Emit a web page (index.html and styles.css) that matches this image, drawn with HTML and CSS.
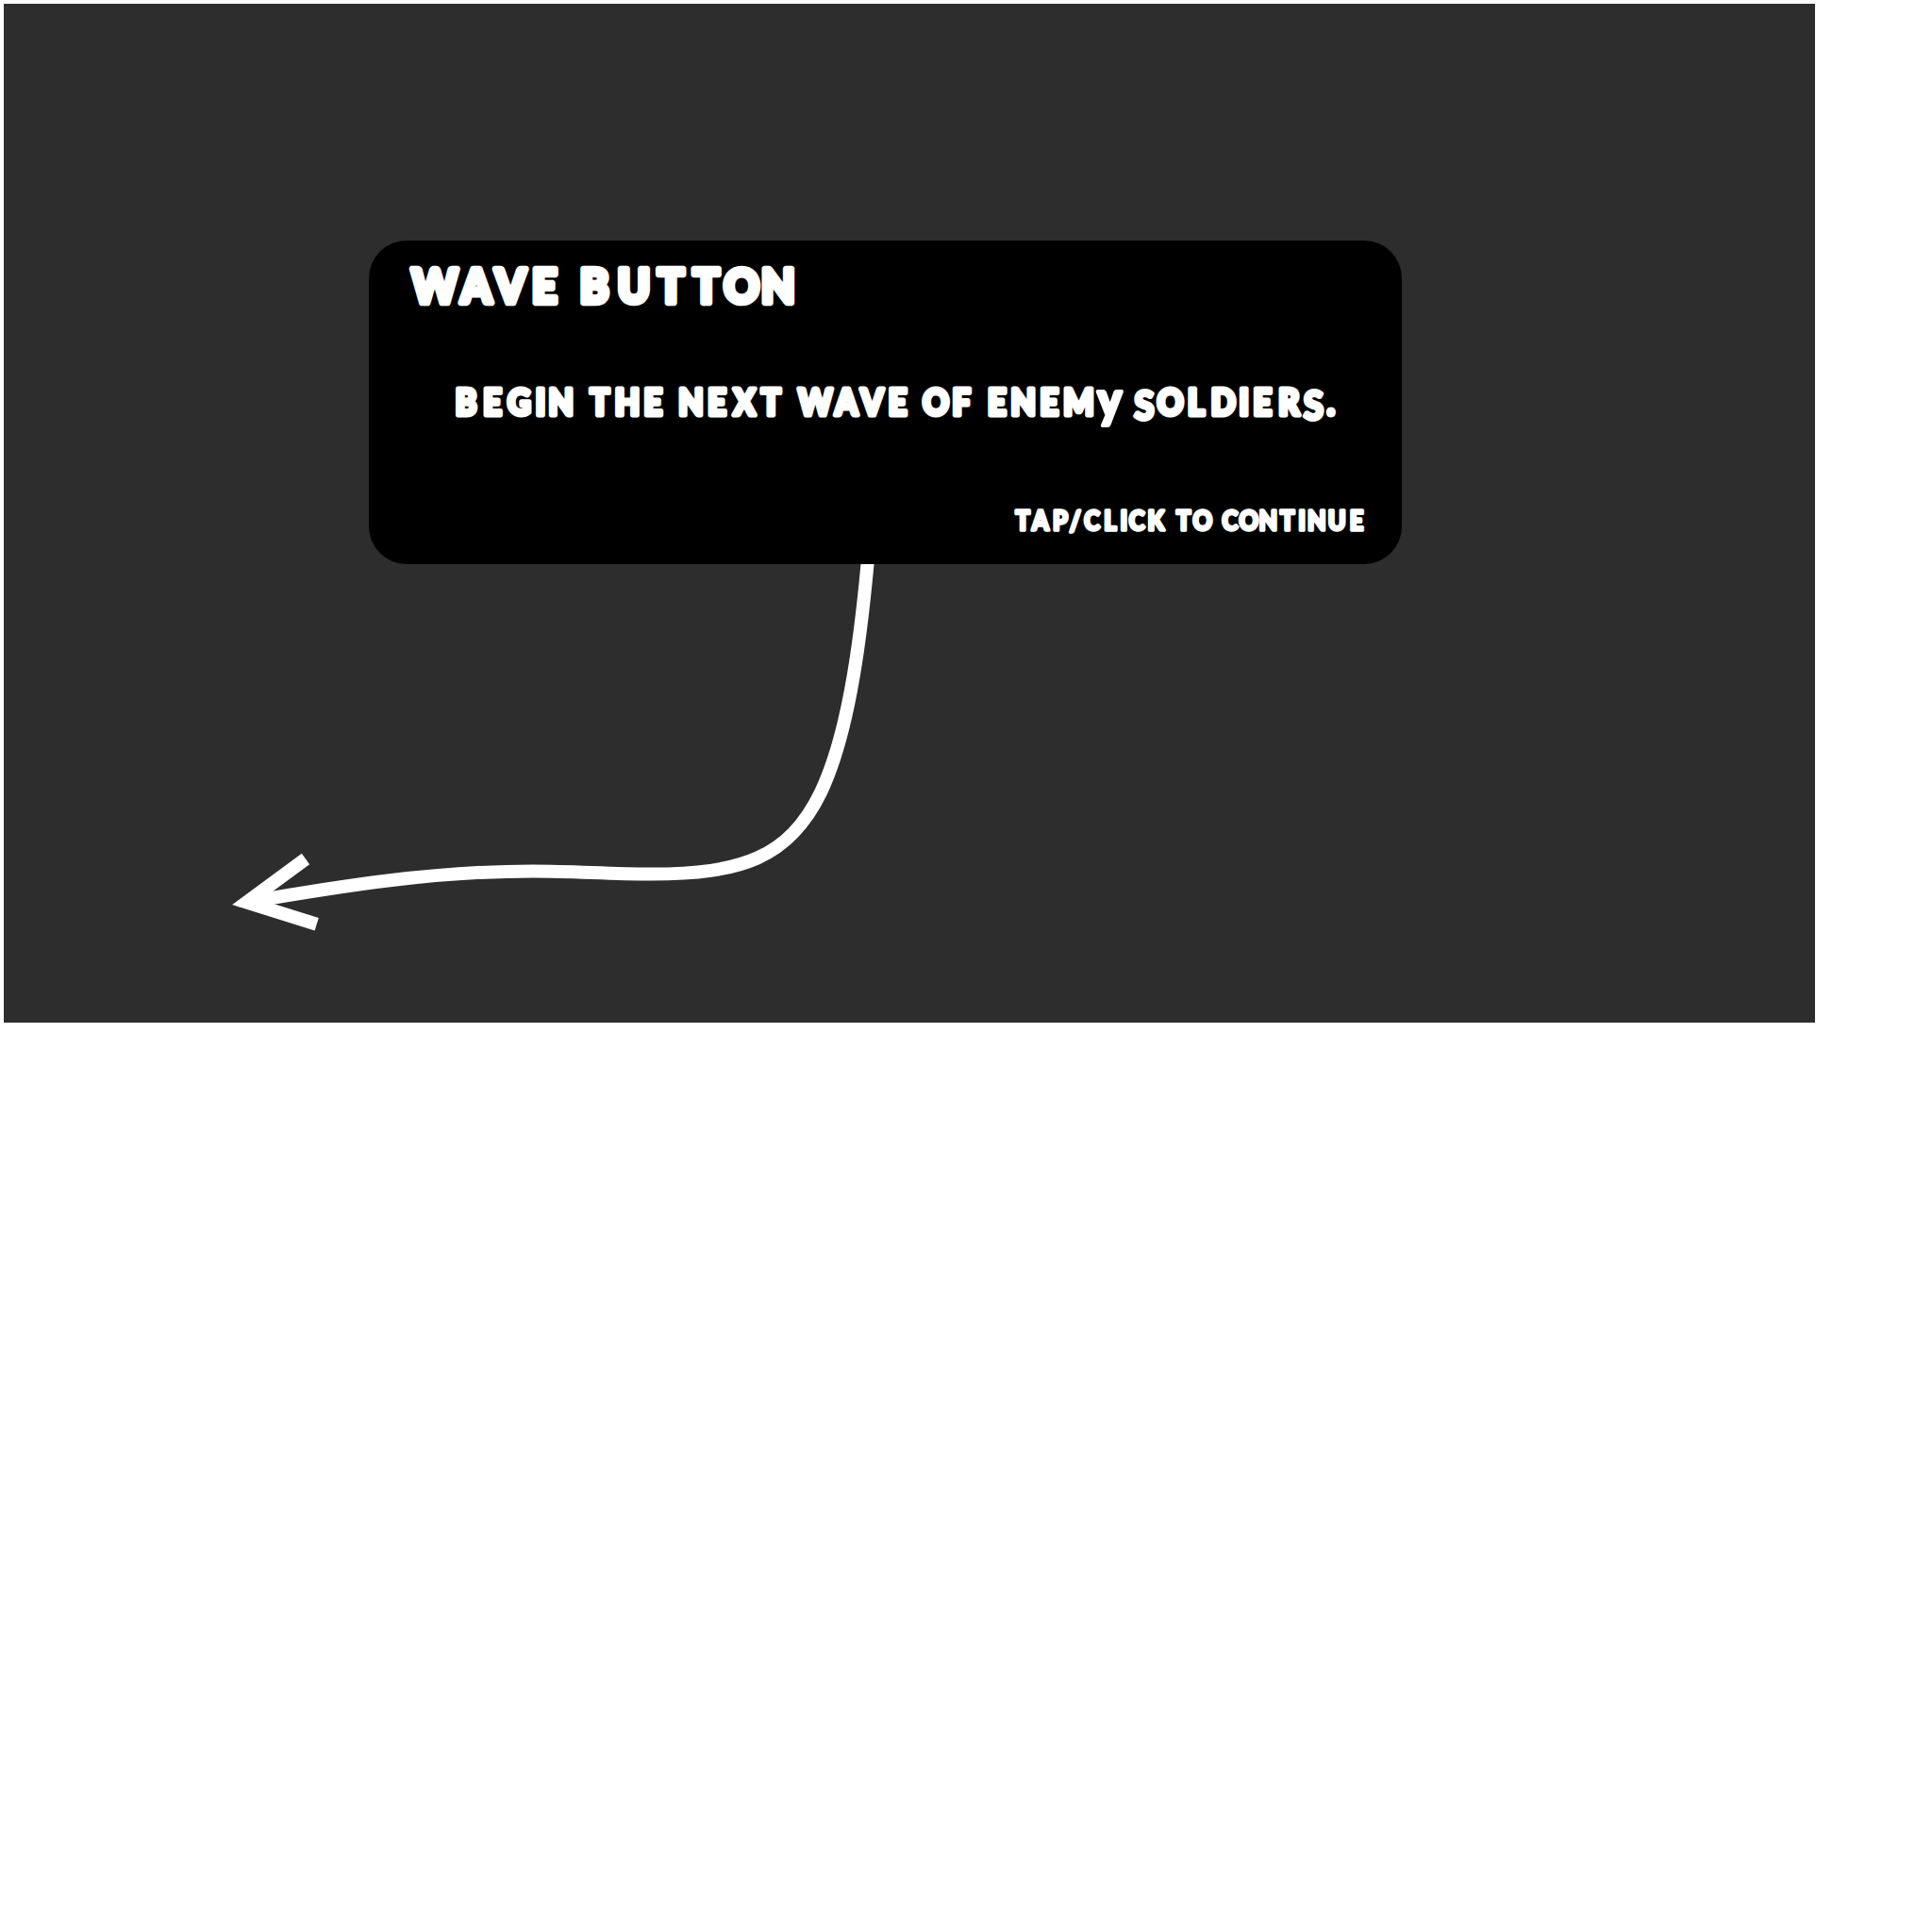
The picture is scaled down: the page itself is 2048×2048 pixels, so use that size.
FILE: index.html
```html
<!DOCTYPE html>
<html lang="en">
<head>
<meta charset="utf-8">
<title>Wave Button</title>
<link rel="stylesheet" href="styles.css">
</head>
<body>
<main class="stage">
  <svg class="arrow" viewBox="4 4 1920 1080" aria-hidden="true">
    <path d="M919.5 590L919.5 598C911 690 898 781 870 840C836 910 785 926.5 690 926.5C645 926.5 610 923.4 565 923.4C460 923.4 360 939.5 264 956"/>
    <path d="M324 910.5L261.4 956.5L335.7 979.7"/>
  </svg>
  <section class="dialog">
    <svg class="line title" viewBox="391 255 1095 90">
      <g transform="scale(.92 1)">
        <text y="321.3" x="500.8 548.9 588.3 627.3">WAVE</text>
        <text y="321.3" x="684.9 730.2 773 813.8 854.6 896.5">BUTTON</text>
      </g>
    </svg>
    <svg class="line message" viewBox="391 391 1095 80">
      <g transform="scale(.92 1)">
        <text y="440.5" x="536.9 567.5 598.2 622.8 646.5">BEGIN</text>
        <text y="440.5" x="691 722.6 752.6">THE</text>
        <text y="440.5" x="796.2 826 857.6 888.3">NEXT</text>
        <text y="440.5" x="939.3 975.2 1004.9 1034.2">WAVE</text>
        <text y="440.5" x="1078.3 1107.8">OF</text>
        <text y="440.5" x="1148.6 1179 1208.9 1242.9 1278.6">ENEM<tspan class="tail" dy="1.5">y</tspan></text>
        <text y="440.5" x="1318.3 1348.4 1378.2 1409.6 1433.4 1454.6 1485 1513.6 1533.4"><tspan class="tall" dy="5">S</tspan><tspan dy="-5">OLDIER</tspan><tspan class="tall" dy="5">S</tspan><tspan dy="-5">.</tspan></text>
      </g>
    </svg>
    <svg class="line hint" viewBox="391 525 1095 60">
      <g transform="scale(.92 1)">
        <text y="561.7" x="1178.5 1198.7 1221.7 1238.9 1258.2 1279.3 1294.8 1310 1331.8">TAP/CLICK</text>
        <text y="561.7" x="1363.8 1385.7">TO</text>
        <text y="561.7" x="1417.1 1438.8 1461.1 1483.2 1500 1517.1 1540.5 1563.1">CONTINUE</text>
      </g>
    </svg>
  </section>
</main>
</body>
</html>
```
FILE: styles.css
```css
body { margin: 0; padding: 4px; background: #fff; }

.stage {
  position: relative;
  box-sizing: border-box;
  width: 1920px;
  height: 1080px;
  padding: 251px 0 0 387px;
  background: #2d2d2d;
}

.arrow {
  position: absolute;
  inset: 0;
  width: 1920px;
  height: 1080px;
  fill: none;
  stroke: #fff;
  stroke-width: 14;
}

.dialog {
  position: relative;
  display: flex;
  flex-direction: column;
  width: 1095px;
  height: 343px;
  border-radius: 40px;
  background: #000;
}

.line {
  display: block;
  overflow: visible;
  width: 1095px;
  fill: #fff;
  stroke: #fff;
  stroke-linejoin: round;
  text-anchor: middle;
  font-family: Lato, "Open Sans", sans-serif;
  font-weight: 900;
}

.title { height: 90px; font-size: 50px; stroke-width: 6.6px; }
.message { height: 80px; margin-top: 46px; font-size: 37px; stroke-width: 5px; }
.message .tall { font-size: 42px; stroke-width: 4px; }
.message .tail { font-size: 52px; stroke-width: 4px; }
.hint { height: 60px; margin-top: 54px; font-size: 27.5px; stroke-width: 3.4px; }
```
